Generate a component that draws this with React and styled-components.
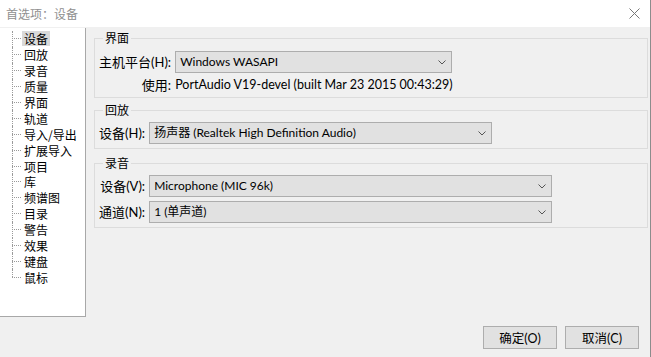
import * as React from "react";
import styled, { createGlobalStyle } from "styled-components";

const GlobalStyle = createGlobalStyle`
  html, body {
    margin: 0;
    padding: 0;
    background: #f0f0f0;
  }
  body {
    font-family: "Lato", "Noto Sans CJK SC", sans-serif;
    font-size: 12px;
    color: #000;
  }
`;

const Window = styled.div`
  width: 651px;
  height: 357px;
  box-sizing: border-box;
  border-right: 1px solid #8c8c8c;
  display: flex;
  flex-direction: column;
  background: #f0f0f0;
  overflow: hidden;
`;

const TitleBar = styled.div`
  height: 27px;
  flex-shrink: 0;
  background: #fff;
  display: flex;
  align-items: center;
  justify-content: space-between;
  padding: 0 10px 0 6px;
`;

const Title = styled.span`
  color: #8f8f8f;
  font-family: "Noto Sans CJK SC", sans-serif;
  font-size: 12px;
`;

const CloseButton = styled.span`
  display: flex;
  width: 12px;
  height: 12px;
  align-items: center;
  justify-content: center;
`;

const Main = styled.div`
  display: flex;
  height: 290px;
  flex-shrink: 0;
`;

const Tree = styled.ul`
  list-style: none;
  margin: 1px 0 0 0;
  padding: 3px 0 0 12px;
  width: 86px;
  box-sizing: border-box;
  background: #fff;
  border-right: 1px solid #a8a8a8;
  border-bottom: 1px solid #a8a8a8;
  font-family: "Noto Sans CJK SC", sans-serif;
`;

const TreeItem = styled.li`
  position: relative;
  height: 15.9px;
  display: flex;
  align-items: center;

  &::before {
    content: "";
    width: 9px;
    border-top: 1px dotted #9a9a9a;
    margin-right: 1px;
  }

  &::after {
    content: "";
    position: absolute;
    left: 0;
    top: 0;
    bottom: ${(p) => (p.$last ? "50%" : "0")};
    border-left: 1px dotted #9a9a9a;
  }
`;

const TreeLabel = styled.span`
  padding: 0 2px;
  line-height: 15px;
  white-space: nowrap;
  background: ${(p) => (p.$selected ? "#d9d9d9" : "transparent")};
`;

const Panels = styled.div`
  flex: 1;
  padding: 4px 2px 0 8px;
  display: flex;
  flex-direction: column;
`;

const Group = styled.fieldset`
  margin: 0 0 ${(p) => p.$gap || 0}px 0;
  padding: ${(p) => p.$top || 5}px 4px 4px 4px;
  border: 1px solid #dcdcdc;
  min-width: 0;
`;

const Legend = styled.legend`
  font-family: "Noto Sans CJK SC", sans-serif;
  line-height: 14px;
  padding: 0 2px;
  margin-left: 4px;
`;

const FormGrid = styled.div`
  display: grid;
  grid-template-columns: max-content 1fr;
  column-gap: 4px;
  row-gap: ${(p) => p.$rowGap || 4}px;
  align-items: center;
`;

const Label = styled.span`
  justify-self: end;
  white-space: nowrap;
  font-size: 13px;
  line-height: 16px;
`;

const Select = styled.div`
  width: ${(p) => p.$width}px;
  height: 22px;
  box-sizing: border-box;
  background: #e1e1e1;
  border: 1px solid #adadad;
  display: flex;
  align-items: center;
  justify-content: space-between;
  padding: 0 5px 0 4px;
  line-height: 16px;
  white-space: nowrap;
`;

const InfoText = styled.span`
  line-height: 16px;
  font-size: 12.5px;
  white-space: nowrap;
`;

const Footer = styled.div`
  display: flex;
  justify-content: flex-end;
  gap: 8px;
  padding: 9px 11px 0 0;
`;

const Button = styled.button`
  width: 74px;
  height: 23px;
  box-sizing: border-box;
  background: #e1e1e1;
  border: 1px solid #adadad;
  font-family: "Lato", "Noto Sans CJK SC", sans-serif;
  font-size: 12.5px;
  color: #000;
  padding: 0;
`;

function Chevron() {
  return (
    <svg width="8" height="5" viewBox="0 0 8 5">
      <path d="M0.5 0.5 L4 4 L7.5 0.5" fill="none" stroke="#555" strokeWidth="1" />
    </svg>
  );
}

function CloseIcon() {
  return (
    <svg width="11" height="11" viewBox="0 0 11 11">
      <path d="M0.5 0.5 L10.5 10.5 M10.5 0.5 L0.5 10.5" stroke="#777" strokeWidth="1" />
    </svg>
  );
}

const sections = [
  "设备", "回放", "录音", "质量", "界面", "轨道", "导入/导出", "扩展导入",
  "项目", "库", "频谱图", "目录", "警告", "效果", "键盘", "鼠标",
];

export default function App() {
  return (
    <>
      <GlobalStyle />
      <Window>
        <TitleBar>
          <Title>首选项：设备</Title>
          <CloseButton>
            <CloseIcon />
          </CloseButton>
        </TitleBar>
        <Main>
          <Tree>
            {sections.map((s, i) => (
              <TreeItem key={s} $last={i === sections.length - 1}>
                <TreeLabel $selected={i === 0}>{s}</TreeLabel>
              </TreeItem>
            ))}
          </Tree>
          <Panels>
            <Group $gap={5} $top={6}>
              <Legend>界面</Legend>
              <FormGrid $rowGap={4}>
                <Label>主机平台(H):</Label>
                <Select $width={277}>
                  Windows WASAPI
                  <Chevron />
                </Select>
                <Label>使用:</Label>
                <InfoText>PortAudio V19-devel (built Mar 23 2015 00:43:29)</InfoText>
              </FormGrid>
            </Group>
            <Group $gap={7}>
              <Legend>回放</Legend>
              <FormGrid>
                <Label>设备(H):</Label>
                <Select $width={343}>
                  扬声器 (Realtek High Definition Audio)
                  <Chevron />
                </Select>
              </FormGrid>
            </Group>
            <Group>
              <Legend>录音</Legend>
              <FormGrid>
                <Label>设备(V):</Label>
                <Select $width={403}>
                  Microphone (MIC 96k)
                  <Chevron />
                </Select>
                <Label>通道(N):</Label>
                <Select $width={403}>
                  1 (单声道)
                  <Chevron />
                </Select>
              </FormGrid>
            </Group>
          </Panels>
        </Main>
        <Footer>
          <Button>确定(O)</Button>
          <Button>取消(C)</Button>
        </Footer>
      </Window>
    </>
  );
}
